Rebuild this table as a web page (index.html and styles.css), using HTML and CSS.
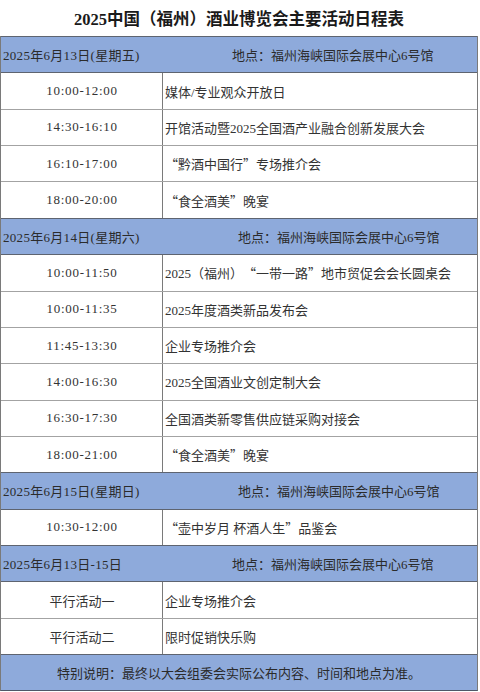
FILE: index.html
```html
<!DOCTYPE html>
<html lang="zh-CN">
<head>
<meta charset="utf-8">
<title>2025中国（福州）酒业博览会主要活动日程表</title>
<link rel="stylesheet" href="styles.css">
</head>
<body>
<div class="sheet">
  <h1 class="title">2025中国（福州）酒业博览会主要活动日程表</h1>
  <div class="table">
    <div class="row head"><span class="date">2025年6月13日(星期五)</span><span class="loc">地点：福州海峡国际会展中心6号馆</span></div>
    <div class="row"><div class="time">10:00-12:00</div><div class="event">媒体/专业观众开放日</div></div>
    <div class="row"><div class="time">14:30-16:10</div><div class="event">开馆活动暨2025全国酒产业融合创新发展大会</div></div>
    <div class="row"><div class="time">16:10-17:00</div><div class="event"><span class="q">“</span>黔酒中国行<span class="q">”</span>专场推介会</div></div>
    <div class="row"><div class="time">18:00-20:00</div><div class="event"><span class="q">“</span>食全酒美<span class="q">”</span>晚宴</div></div>

    <div class="row head"><span class="date">2025年6月14日(星期六)</span><span class="loc loc-shift">地点：福州海峡国际会展中心6号馆</span></div>
    <div class="row"><div class="time">10:00-11:50</div><div class="event">2025（福州）<span class="q">“</span>一带一路<span class="q">”</span>地市贸促会会长圆桌会</div></div>
    <div class="row"><div class="time">10:00-11:35</div><div class="event">2025年度酒类新品发布会</div></div>
    <div class="row"><div class="time">11:45-13:30</div><div class="event">企业专场推介会</div></div>
    <div class="row"><div class="time">14:00-16:30</div><div class="event">2025全国酒业文创定制大会</div></div>
    <div class="row"><div class="time">16:30-17:30</div><div class="event">全国酒类新零售供应链采购对接会</div></div>
    <div class="row"><div class="time">18:00-21:00</div><div class="event"><span class="q">“</span>食全酒美<span class="q">”</span>晚宴</div></div>

    <div class="row head"><span class="date">2025年6月15日(星期日)</span><span class="loc loc-shift">地点：福州海峡国际会展中心6号馆</span></div>
    <div class="row"><div class="time">10:30-12:00</div><div class="event"><span class="q">“</span>壶中岁月 杯酒人生<span class="q">”</span>品鉴会</div></div>

    <div class="row head"><span class="date">2025年6月13日-15日</span><span class="loc">地点：福州海峡国际会展中心6号馆</span></div>
    <div class="row"><div class="time cjk">平行活动一</div><div class="event">企业专场推介会</div></div>
    <div class="row"><div class="time cjk">平行活动二</div><div class="event">限时促销快乐购</div></div>

    <div class="row head foot">特别说明：最终以大会组委会实际公布内容、时间和地点为准。</div>
  </div>
</div>
</body>
</html>
```

FILE: styles.css
```css
html, body {
  margin: 0;
  padding: 0;
  background: #ffffff;
}

body {
  font-family: "Liberation Serif", "Noto Sans CJK SC", serif;
  font-size: 13px;
  color: #333333;
}

.sheet {
  width: 480px;
  height: 692px;
  overflow: hidden;
}

.title {
  margin: 0;
  height: 36px;
  width: 478px;
  display: flex;
  align-items: center;
  justify-content: center;
  font-size: 16.5px;
  font-weight: 700;
  color: #1a1a1a;
  font-family: "Liberation Serif", "Noto Sans CJK SC", serif;
}

.table {
  width: 478px;
  box-sizing: border-box;
  border-left: 1px solid #7a7a7a;
  border-right: 1px solid #7a7a7a;
  border-bottom: 1px solid #4f5868;
}

.row {
  box-sizing: border-box;
  height: 36.37px;
  border-top: 1px solid #a3a3a3;
  display: grid;
  grid-template-columns: 162px 1fr;
  align-items: center;
}

.row.head {
  background: #8eaadb;
  border-top-color: #5e6470;
  grid-template-columns: 231px 1fr;
  color: #2b2b2b;
}

.row.head + .row {
  border-top-color: #5e6470;
}

.date {
  padding-left: 2px;
  white-space: nowrap;
  letter-spacing: 0.3px;
}

.loc {
  white-space: nowrap;
}

.loc-shift {
  padding-left: 6px;
}

.time {
  height: 100%;
  box-sizing: border-box;
  border-right: 1px solid #7a7a7a;
  display: flex;
  align-items: center;
  justify-content: center;
  letter-spacing: 0.7px;
  padding-left: 1px;
}

.time.cjk {
  letter-spacing: 0;
}

.event {
  padding-left: 2px;
  white-space: nowrap;
}

.q {
  font-family: "Noto Sans CJK SC", sans-serif;
  display: inline-block;
  width: 13px;
}

.q:first-child,
.event > .q:nth-of-type(odd) {
  text-align: right;
}

.event > .q:nth-of-type(even) {
  text-align: left;
}

.row.foot {
  display: flex;
  justify-content: center;
}
```
